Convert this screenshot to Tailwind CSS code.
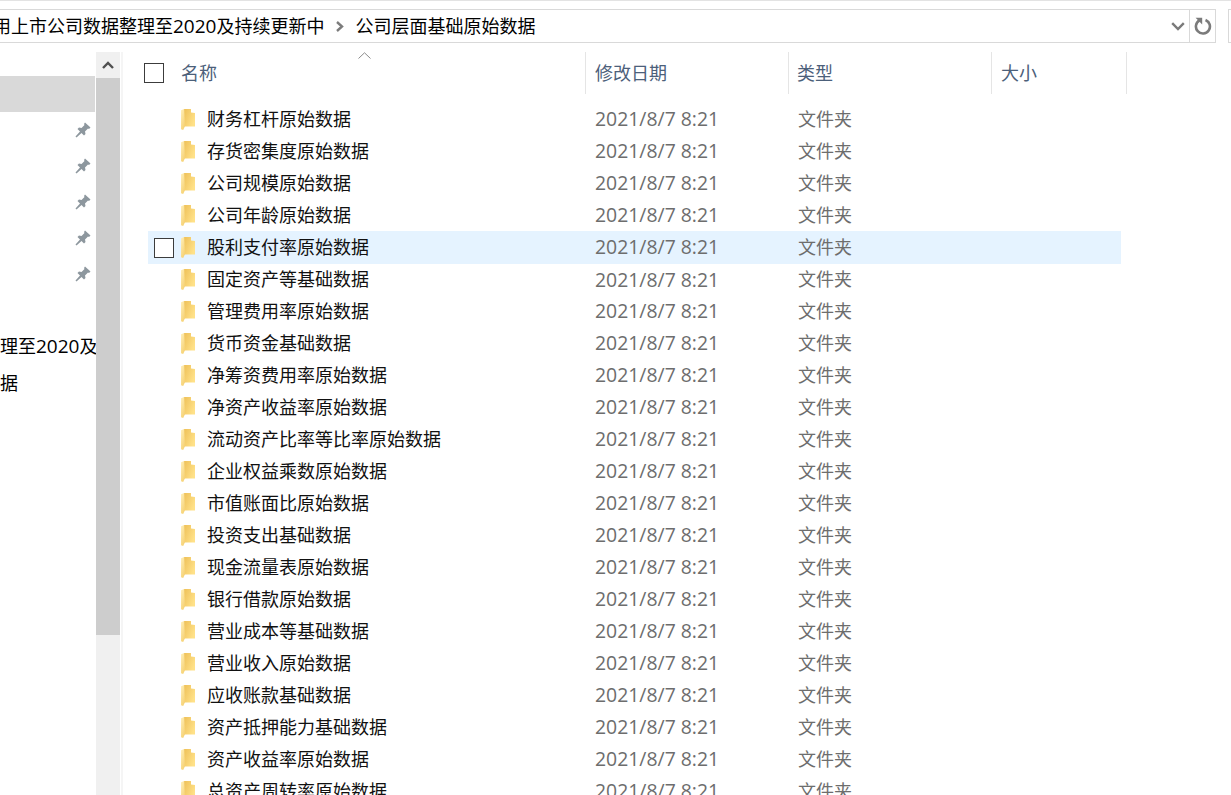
<!DOCTYPE html>
<html lang="zh">
<head>
<meta charset="utf-8">
<title>公司层面基础原始数据</title>
<script src="https://cdn.jsdelivr.net/npm/@tailwindcss/browser@4"></script>
</head>
<body class="bg-white">
<svg width="0" height="0" class="absolute">
  <defs>
    <linearGradient id="fg" x1="0" y1="0" x2="0.6" y2="1"><stop offset="0" stop-color="#fff0bd"/><stop offset="1" stop-color="#f6d274"/></linearGradient>
    <linearGradient id="bg" x1="0" y1="0" x2="1" y2="0.6"><stop offset="0" stop-color="#eec058"/><stop offset="1" stop-color="#ffe188"/></linearGradient>
    <symbol id="folder" viewBox="0 0 14 21">
      <path d="M3 0H10V3.5L14 4V17.5H3Z" fill="url(#bg)"/>
      <path d="M0 1.2L3.2 0L4 17L2.2 21L0 20.2Z" fill="url(#fg)"/>
    </symbol>
    <symbol id="pin" viewBox="0 0 16 16">
      <path d="M10 0.5L15.5 5.5L14 7L13 6.5L10 9.5L10.5 12L9 13.5L6.5 11L1.5 15.5L0.5 14.5L5 9.5L2.5 7L4 5.5L6.5 6L9.5 3L9 2Z" fill="#8d979e"/>
    </symbol>
  </defs>
</svg>
<div class="w-[1231px] h-[795px] overflow-hidden flex flex-col font-['Noto_Sans_CJK_SC','Noto_Sans',sans-serif] text-[18px] text-black">
  <div class="h-[1px] bg-[#e3e3e3] shrink-0"></div>
  <div class="mt-[8px] h-[34px] shrink-0 flex">
    <div class="w-[1217px] shrink-0 -ml-[1px] h-full border border-[#d9d9d9] flex items-center overflow-hidden">
      <span class="whitespace-nowrap -ml-[7px] leading-[30px] mb-[2px]">用上市公司数据整理至<span class="font-['Open_Sans',sans-serif] text-[19px]">2020</span>及持续更新中</span>
      <svg class="ml-[11px] w-[9px] h-[11px] shrink-0" viewBox="0 0 9 11"><path d="M2 1L7 5.5L2 10" fill="none" stroke="#7c7c7c" stroke-width="2.4"/></svg>
      <span class="whitespace-nowrap ml-[11px] leading-[30px] mb-[2px]">公司层面基础原始数据</span>
      <svg class="ml-auto mr-[4px] w-[14px] h-[9px] shrink-0" viewBox="0 0 14 9"><path d="M1.2 1.2L7 7L12.8 1.2" fill="none" stroke="#7a7a7a" stroke-width="2.4"/></svg>
      <div class="w-[26px] h-full shrink-0 border-l border-[#d9d9d9] flex items-center justify-center">
        <svg class="w-[18px] h-[18px]" viewBox="0 0 18 18"><path d="M5.5 3.4A7 7 0 1 0 11.5 3" fill="none" stroke="#7b7b7b" stroke-width="2.6"/><path d="M1.6 0.8H8.2V7.4Z" fill="#7b7b7b"/></svg>
      </div>
    </div>
    <div class="ml-[12px] w-[20px] shrink-0 h-full border border-[#d9d9d9]"></div>
  </div>
  <div class="mt-[9px] flex-1 flex min-h-0">
    <aside class="w-[121px] shrink-0 flex">
      <div class="w-[96px] pt-[24px] overflow-hidden">
        <div class="h-[36px] w-[95px] bg-[#d9d9d9]"></div>
        <div class="h-[36px] flex items-center justify-end pr-[5px]"><svg class="w-[16px] h-[16px]"><use href="#pin"/></svg></div>
        <div class="h-[36px] flex items-center justify-end pr-[5px]"><svg class="w-[16px] h-[16px]"><use href="#pin"/></svg></div>
        <div class="h-[36px] flex items-center justify-end pr-[5px]"><svg class="w-[16px] h-[16px]"><use href="#pin"/></svg></div>
        <div class="h-[36px] flex items-center justify-end pr-[5px]"><svg class="w-[16px] h-[16px]"><use href="#pin"/></svg></div>
        <div class="h-[36px] flex items-center justify-end pr-[5px]"><svg class="w-[16px] h-[16px]"><use href="#pin"/></svg></div>
        <div class="h-[36px]"></div>
        <div class="h-[36px] flex items-center whitespace-nowrap overflow-hidden"><span>理至<span class="font-['Open_Sans',sans-serif] text-[19px]">2020</span>及持续更新中</span></div>
        <div class="h-[36px] flex items-center whitespace-nowrap">据</div>
      </div>
      <div class="w-[24px] bg-[#f0f0f0] flex flex-col">
        <div class="h-[26px] flex items-center justify-center shrink-0">
          <svg class="w-[12px] h-[8px]" viewBox="0 0 12 8"><path d="M1 7L6 2L11 7" fill="none" stroke="#505050" stroke-width="2.4"/></svg>
        </div>
        <div class="h-[557px] bg-[#cdcdcd] shrink-0"></div>
      </div>
      <div class="w-[1px]"></div>
    </aside>
    <div class="w-[2px] bg-[#f5f5f5] shrink-0"></div>
    <main class="flex-1 min-w-0 relative">
      <div class="h-[42px] flex items-center relative">
        <div class="ml-[21px] w-[20px] h-[20px] border border-[#3c3c3c] shrink-0"></div>
        <div class="ml-[17px] w-[404px] text-[#4c607a] shrink-0 mb-[2px]">名称</div>
        <div class="w-[203px] h-full border-l border-[#e5e5e5] pl-[9px] pb-[2px] flex items-center text-[#4c607a] shrink-0">修改日期</div>
        <div class="w-[203px] h-full border-l border-[#e5e5e5] pl-[8px] pb-[2px] flex items-center text-[#4c607a] shrink-0">类型</div>
        <div class="w-[136px] h-full border-l border-r border-[#e5e5e5] pl-[9px] pb-[2px] flex items-center text-[#4c607a] shrink-0">大小</div>
        <svg class="absolute left-[235px] top-0 w-[13px] h-[7px]" viewBox="0 0 13 7"><path d="M0.5 6.5L6.5 0.8L12.5 6.5" fill="none" stroke="#8a8a8a" stroke-width="1"/></svg>
      </div>
      <div class="pt-[9px] ml-[25px] w-[973px]">
        <div class="h-[32px] flex items-center"><svg class="ml-[33px] w-[14px] h-[21px] shrink-0"><use href="#folder"/></svg><span class="ml-[12px] w-[388px] shrink-0 text-[#111] mb-[2px]">财务杠杆原始数据</span><span class="w-[203px] shrink-0 text-[#6d6d6d] font-['Open_Sans','Noto_Sans',sans-serif] text-[19.4px]">2021/8/7 8:21</span><span class="text-[#6d6d6d] mb-[2px]">文件夹</span></div>
        <div class="h-[32px] flex items-center"><svg class="ml-[33px] w-[14px] h-[21px] shrink-0"><use href="#folder"/></svg><span class="ml-[12px] w-[388px] shrink-0 text-[#111] mb-[2px]">存货密集度原始数据</span><span class="w-[203px] shrink-0 text-[#6d6d6d] font-['Open_Sans','Noto_Sans',sans-serif] text-[19.4px]">2021/8/7 8:21</span><span class="text-[#6d6d6d] mb-[2px]">文件夹</span></div>
        <div class="h-[32px] flex items-center"><svg class="ml-[33px] w-[14px] h-[21px] shrink-0"><use href="#folder"/></svg><span class="ml-[12px] w-[388px] shrink-0 text-[#111] mb-[2px]">公司规模原始数据</span><span class="w-[203px] shrink-0 text-[#6d6d6d] font-['Open_Sans','Noto_Sans',sans-serif] text-[19.4px]">2021/8/7 8:21</span><span class="text-[#6d6d6d] mb-[2px]">文件夹</span></div>
        <div class="h-[32px] flex items-center"><svg class="ml-[33px] w-[14px] h-[21px] shrink-0"><use href="#folder"/></svg><span class="ml-[12px] w-[388px] shrink-0 text-[#111] mb-[2px]">公司年龄原始数据</span><span class="w-[203px] shrink-0 text-[#6d6d6d] font-['Open_Sans','Noto_Sans',sans-serif] text-[19.4px]">2021/8/7 8:21</span><span class="text-[#6d6d6d] mb-[2px]">文件夹</span></div>
        <div class="h-[33px] flex items-center bg-[#e5f3ff]"><div class="ml-[6px] w-[20px] h-[20px] border border-[#3c3c3c] bg-white shrink-0"></div><svg class="ml-[7px] w-[14px] h-[21px] shrink-0"><use href="#folder"/></svg><span class="ml-[12px] w-[388px] shrink-0 text-[#111] mb-[2px]">股利支付率原始数据</span><span class="w-[203px] shrink-0 text-[#6d6d6d] font-['Open_Sans','Noto_Sans',sans-serif] text-[19.4px] mb-[1px]">2021/8/7 8:21</span><span class="text-[#6d6d6d] mb-[2px]">文件夹</span></div>
        <div class="h-[31px] flex items-center"><svg class="ml-[33px] w-[14px] h-[21px] shrink-0"><use href="#folder"/></svg><span class="ml-[12px] w-[388px] shrink-0 text-[#111] mb-[2px]">固定资产等基础数据</span><span class="w-[203px] shrink-0 text-[#6d6d6d] font-['Open_Sans','Noto_Sans',sans-serif] text-[19.4px] mt-[1px]">2021/8/7 8:21</span><span class="text-[#6d6d6d] mb-[2px]">文件夹</span></div>
        <div class="h-[32px] flex items-center"><svg class="ml-[33px] w-[14px] h-[21px] shrink-0"><use href="#folder"/></svg><span class="ml-[12px] w-[388px] shrink-0 text-[#111] mb-[2px]">管理费用率原始数据</span><span class="w-[203px] shrink-0 text-[#6d6d6d] font-['Open_Sans','Noto_Sans',sans-serif] text-[19.4px]">2021/8/7 8:21</span><span class="text-[#6d6d6d] mb-[2px]">文件夹</span></div>
        <div class="h-[32px] flex items-center"><svg class="ml-[33px] w-[14px] h-[21px] shrink-0"><use href="#folder"/></svg><span class="ml-[12px] w-[388px] shrink-0 text-[#111] mb-[2px]">货币资金基础数据</span><span class="w-[203px] shrink-0 text-[#6d6d6d] font-['Open_Sans','Noto_Sans',sans-serif] text-[19.4px]">2021/8/7 8:21</span><span class="text-[#6d6d6d] mb-[2px]">文件夹</span></div>
        <div class="h-[32px] flex items-center"><svg class="ml-[33px] w-[14px] h-[21px] shrink-0"><use href="#folder"/></svg><span class="ml-[12px] w-[388px] shrink-0 text-[#111] mb-[2px]">净筹资费用率原始数据</span><span class="w-[203px] shrink-0 text-[#6d6d6d] font-['Open_Sans','Noto_Sans',sans-serif] text-[19.4px]">2021/8/7 8:21</span><span class="text-[#6d6d6d] mb-[2px]">文件夹</span></div>
        <div class="h-[32px] flex items-center"><svg class="ml-[33px] w-[14px] h-[21px] shrink-0"><use href="#folder"/></svg><span class="ml-[12px] w-[388px] shrink-0 text-[#111] mb-[2px]">净资产收益率原始数据</span><span class="w-[203px] shrink-0 text-[#6d6d6d] font-['Open_Sans','Noto_Sans',sans-serif] text-[19.4px]">2021/8/7 8:21</span><span class="text-[#6d6d6d] mb-[2px]">文件夹</span></div>
        <div class="h-[32px] flex items-center"><svg class="ml-[33px] w-[14px] h-[21px] shrink-0"><use href="#folder"/></svg><span class="ml-[12px] w-[388px] shrink-0 text-[#111] mb-[2px]">流动资产比率等比率原始数据</span><span class="w-[203px] shrink-0 text-[#6d6d6d] font-['Open_Sans','Noto_Sans',sans-serif] text-[19.4px]">2021/8/7 8:21</span><span class="text-[#6d6d6d] mb-[2px]">文件夹</span></div>
        <div class="h-[32px] flex items-center"><svg class="ml-[33px] w-[14px] h-[21px] shrink-0"><use href="#folder"/></svg><span class="ml-[12px] w-[388px] shrink-0 text-[#111] mb-[2px]">企业权益乘数原始数据</span><span class="w-[203px] shrink-0 text-[#6d6d6d] font-['Open_Sans','Noto_Sans',sans-serif] text-[19.4px]">2021/8/7 8:21</span><span class="text-[#6d6d6d] mb-[2px]">文件夹</span></div>
        <div class="h-[32px] flex items-center"><svg class="ml-[33px] w-[14px] h-[21px] shrink-0"><use href="#folder"/></svg><span class="ml-[12px] w-[388px] shrink-0 text-[#111] mb-[2px]">市值账面比原始数据</span><span class="w-[203px] shrink-0 text-[#6d6d6d] font-['Open_Sans','Noto_Sans',sans-serif] text-[19.4px]">2021/8/7 8:21</span><span class="text-[#6d6d6d] mb-[2px]">文件夹</span></div>
        <div class="h-[32px] flex items-center"><svg class="ml-[33px] w-[14px] h-[21px] shrink-0"><use href="#folder"/></svg><span class="ml-[12px] w-[388px] shrink-0 text-[#111] mb-[2px]">投资支出基础数据</span><span class="w-[203px] shrink-0 text-[#6d6d6d] font-['Open_Sans','Noto_Sans',sans-serif] text-[19.4px]">2021/8/7 8:21</span><span class="text-[#6d6d6d] mb-[2px]">文件夹</span></div>
        <div class="h-[32px] flex items-center"><svg class="ml-[33px] w-[14px] h-[21px] shrink-0"><use href="#folder"/></svg><span class="ml-[12px] w-[388px] shrink-0 text-[#111] mb-[2px]">现金流量表原始数据</span><span class="w-[203px] shrink-0 text-[#6d6d6d] font-['Open_Sans','Noto_Sans',sans-serif] text-[19.4px]">2021/8/7 8:21</span><span class="text-[#6d6d6d] mb-[2px]">文件夹</span></div>
        <div class="h-[32px] flex items-center"><svg class="ml-[33px] w-[14px] h-[21px] shrink-0"><use href="#folder"/></svg><span class="ml-[12px] w-[388px] shrink-0 text-[#111] mb-[2px]">银行借款原始数据</span><span class="w-[203px] shrink-0 text-[#6d6d6d] font-['Open_Sans','Noto_Sans',sans-serif] text-[19.4px]">2021/8/7 8:21</span><span class="text-[#6d6d6d] mb-[2px]">文件夹</span></div>
        <div class="h-[32px] flex items-center"><svg class="ml-[33px] w-[14px] h-[21px] shrink-0"><use href="#folder"/></svg><span class="ml-[12px] w-[388px] shrink-0 text-[#111] mb-[2px]">营业成本等基础数据</span><span class="w-[203px] shrink-0 text-[#6d6d6d] font-['Open_Sans','Noto_Sans',sans-serif] text-[19.4px]">2021/8/7 8:21</span><span class="text-[#6d6d6d] mb-[2px]">文件夹</span></div>
        <div class="h-[32px] flex items-center"><svg class="ml-[33px] w-[14px] h-[21px] shrink-0"><use href="#folder"/></svg><span class="ml-[12px] w-[388px] shrink-0 text-[#111] mb-[2px]">营业收入原始数据</span><span class="w-[203px] shrink-0 text-[#6d6d6d] font-['Open_Sans','Noto_Sans',sans-serif] text-[19.4px]">2021/8/7 8:21</span><span class="text-[#6d6d6d] mb-[2px]">文件夹</span></div>
        <div class="h-[32px] flex items-center"><svg class="ml-[33px] w-[14px] h-[21px] shrink-0"><use href="#folder"/></svg><span class="ml-[12px] w-[388px] shrink-0 text-[#111] mb-[2px]">应收账款基础数据</span><span class="w-[203px] shrink-0 text-[#6d6d6d] font-['Open_Sans','Noto_Sans',sans-serif] text-[19.4px]">2021/8/7 8:21</span><span class="text-[#6d6d6d] mb-[2px]">文件夹</span></div>
        <div class="h-[32px] flex items-center"><svg class="ml-[33px] w-[14px] h-[21px] shrink-0"><use href="#folder"/></svg><span class="ml-[12px] w-[388px] shrink-0 text-[#111] mb-[2px]">资产抵押能力基础数据</span><span class="w-[203px] shrink-0 text-[#6d6d6d] font-['Open_Sans','Noto_Sans',sans-serif] text-[19.4px]">2021/8/7 8:21</span><span class="text-[#6d6d6d] mb-[2px]">文件夹</span></div>
        <div class="h-[32px] flex items-center"><svg class="ml-[33px] w-[14px] h-[21px] shrink-0"><use href="#folder"/></svg><span class="ml-[12px] w-[388px] shrink-0 text-[#111] mb-[2px]">资产收益率原始数据</span><span class="w-[203px] shrink-0 text-[#6d6d6d] font-['Open_Sans','Noto_Sans',sans-serif] text-[19.4px]">2021/8/7 8:21</span><span class="text-[#6d6d6d] mb-[2px]">文件夹</span></div>
        <div class="h-[32px] flex items-center"><svg class="ml-[33px] w-[14px] h-[21px] shrink-0"><use href="#folder"/></svg><span class="ml-[12px] w-[388px] shrink-0 text-[#111] mb-[2px]">总资产周转率原始数据</span><span class="w-[203px] shrink-0 text-[#6d6d6d] font-['Open_Sans','Noto_Sans',sans-serif] text-[19.4px]">2021/8/7 8:21</span><span class="text-[#6d6d6d] mb-[2px]">文件夹</span></div>
      </div>
    </main>
  </div>
</div>
</body>
</html>
